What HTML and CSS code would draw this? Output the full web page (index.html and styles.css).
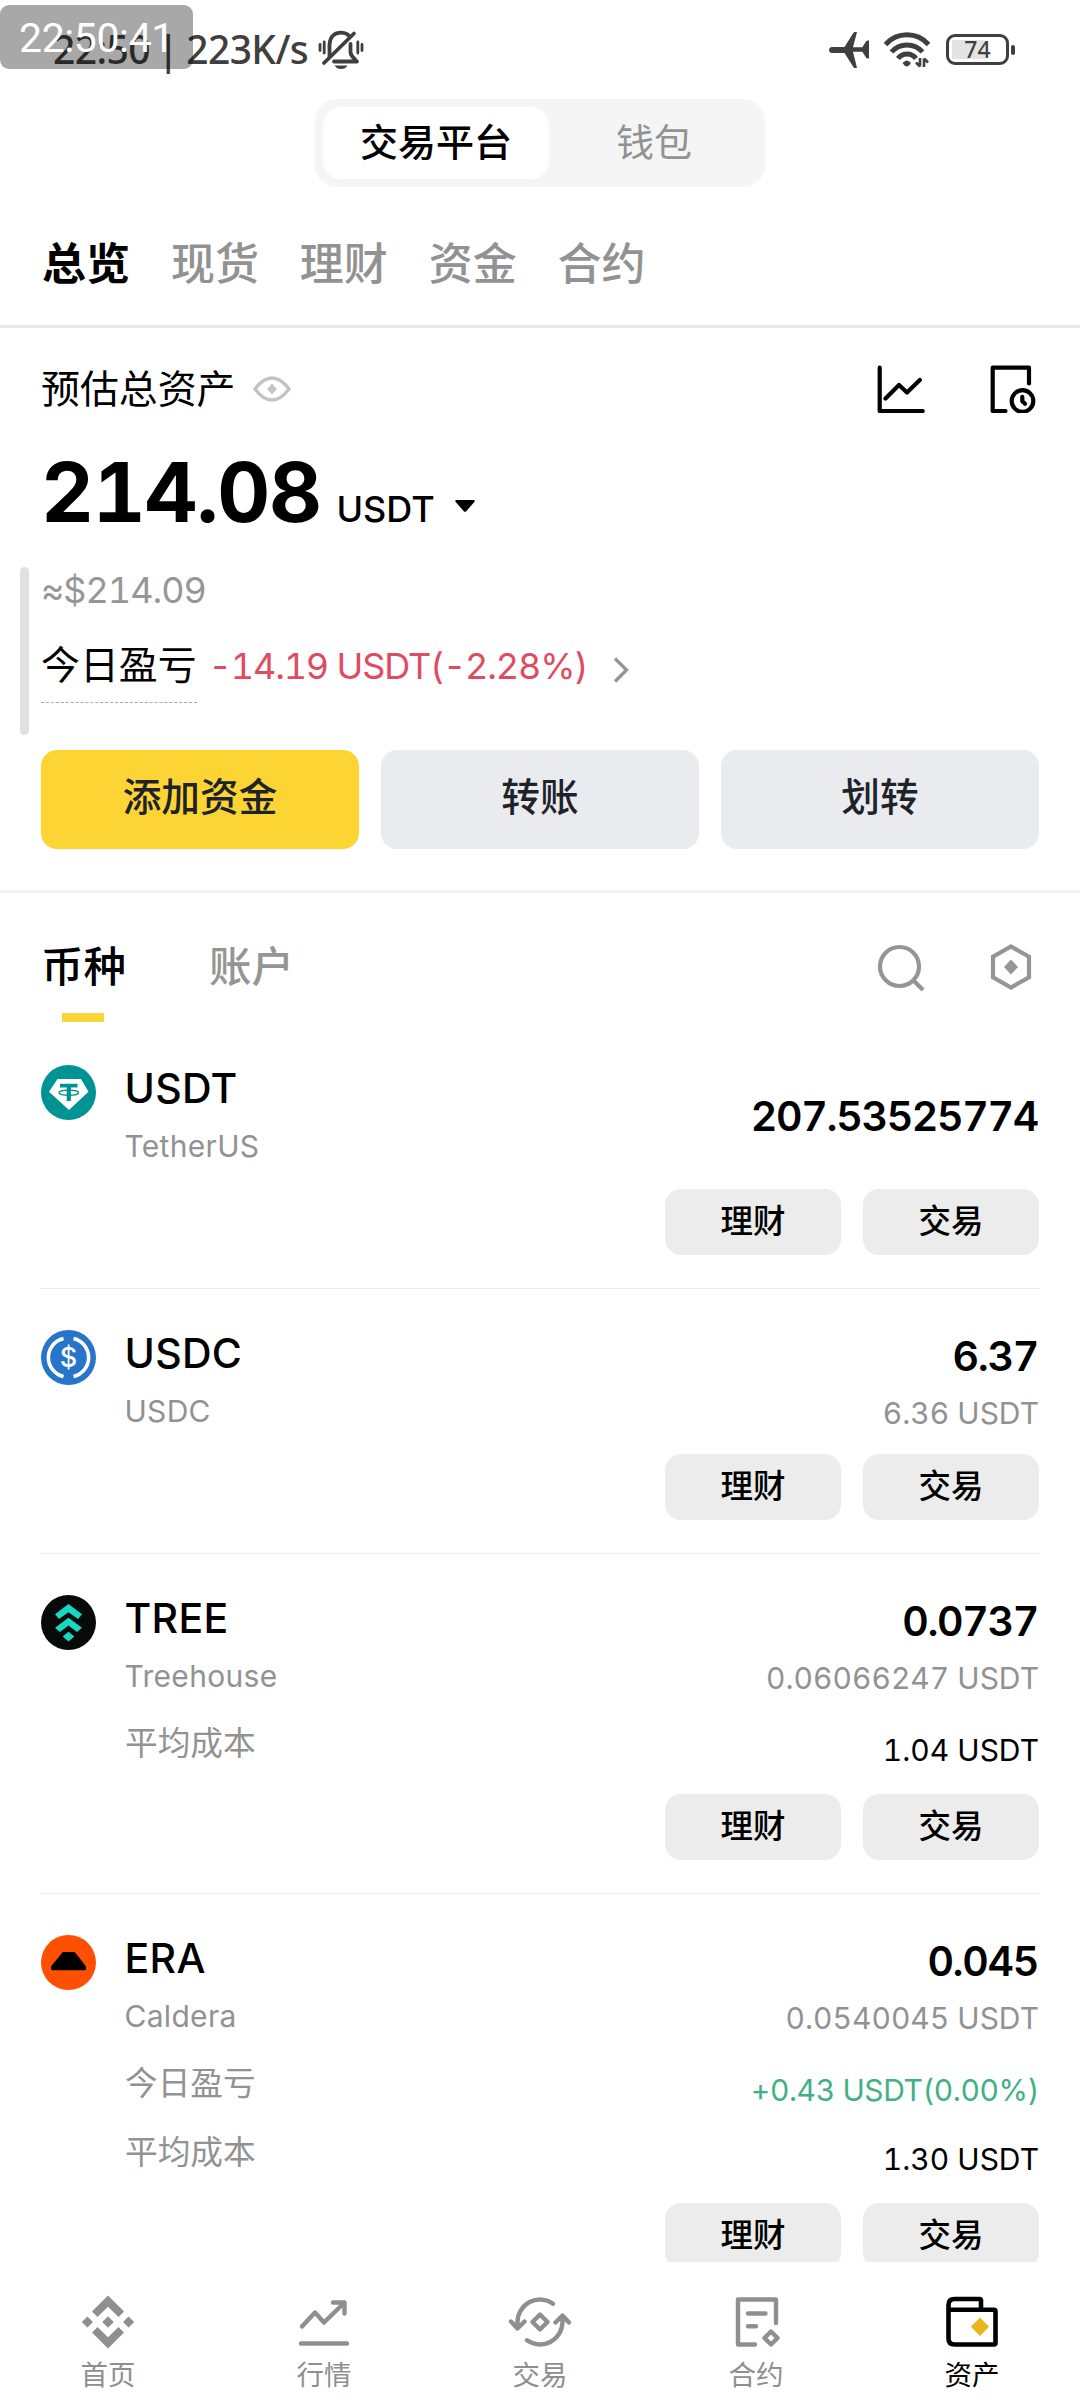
FILE: index.html
```html
<!DOCTYPE html>
<html lang="zh-CN">
<head>
<meta charset="utf-8">
<title>资产总览</title>
<link rel="stylesheet" href="styles.css">
</head>
<body>
<div class="app">
  <div class="clock-overlay">22:50:41</div>
  <header class="status">
    <span class="status-text">22:50 | 223K/s</span>
    <svg class="bell" width="46" height="40" viewBox="0 0 46 40" fill="none" stroke="#3f3f3f" stroke-width="3.8" stroke-linecap="round">
      <path d="M11.500 27V14.500C12 6 17 2.700 23 2.700c3 0 6 1 8 3M32.500 14v8c0 3 2 5 6.500 9.500H16" stroke-linejoin="round"/>
      <path d="M36 3.500 6 33"/>
      <path d="M16.500 35.500h13c-1.500 2.300-3.500 3.600-6.500 3.600s-5-1.300-6.500-3.600z" fill="#3f3f3f" stroke="none"/>
      <path d="M2 14.500v6M6.200 12v11M39.800 12v11M44 14.500v6" stroke-width="2.800"/>
    </svg>
    <div class="status-right">
      <svg width="40" height="38" viewBox="0 0 40 38" fill="#3f3f3f"><path d="M3 16h12.500L24 2.500c.6-1 1.300-1.500 2.200-1.500h1.800L24 16.200h9.300l3.700-5.700c.5-.8 1.200-1 3-1v18c-1.800 0-2.500-.2-3-1l-3.700-5.700H24L28 37h-1.800c-.9 0-1.600-.5-2.200-1.500L15.500 22H3c-4 0-4-6 0-6z"/></svg>
      <svg class="wifi" width="46" height="36" viewBox="0 0 46 36" fill="none" stroke="#3f3f3f" stroke-width="5">
        <path d="M1.500 12.500C13-.5 33-.5 44.500 12.500M7.500 20c8-9.500 23-9.500 31 0M14 26.500c4.500-6 13.500-6 18 0"/>
        <path d="M18.500 31q4.500-5 8.500 0l-2 2.500q-2.250 2-4.500 0z" fill="#3f3f3f" stroke="none"/>
        <path d="M36 26v8.500M40 35v-8.500M32 30.500l4 4M40 26.500l4 4" stroke-width="2.600"/>
      </svg>
      <div class="battery">74</div>
    </div>
  </header>

  <div class="segment">
    <div class="segment-item segment-item--on">交易平台</div>
    <div class="segment-item">钱包</div>
  </div>

  <nav class="tabs">
    <span class="tab tab--on">总览</span><span class="tab">现货</span><span class="tab">理财</span><span class="tab">资金</span><span class="tab">合约</span>
  </nav>

  <section class="portfolio">
    <div class="portfolio-top">
      <span>预估总资产</span>
      <svg class="eye" width="38" height="26" viewBox="0 0 38 26"><path d="M2 13C8 5 13 2 19 2s11 3 17 11C30 21 25 24 19 24S8 21 2 13z" fill="none" stroke="#c3c3c3" stroke-width="3.400"/><path d="M19 7.500l4.800 5.500-4.800 5.500-4.800-5.500z" fill="#c3c3c3"/></svg>
      <div class="portfolio-tools">
        <svg width="48" height="48" viewBox="0 0 48 48" fill="none" stroke="#000" stroke-width="4.200" stroke-linecap="round" stroke-linejoin="round"><path d="M2.700 2.700v43.300h43M8.500 33.500 22 20l8 7.500L42.800 15"/></svg>
        <svg width="46" height="48" viewBox="0 0 46 48" fill="none" stroke="#000" stroke-width="4.200" stroke-linecap="round" stroke-linejoin="round"><path d="M39 18.500V2.700H2.700V46H15.500"/><circle cx="32.500" cy="36" r="10.800"/><path d="M32.300 31.800v4.400l2.700 2.600"/></svg>
      </div>
    </div>
    <div class="balance">
      <span class="balance-value">214.08</span><span class="balance-unit">USDT</span>
      <svg class="caret" width="20" height="12" viewBox="0 0 20 12"><path d="M1 0h18q1.200.6.500 1.800L11.200 11.300q-1.200 1-2.400 0L.5 1.800Q-.2.600 1 0z"/></svg>
    </div>
    <div class="approx">≈$214.09</div>
    <div class="pnl">
      <span class="pnl-label">今日盈亏</span>
      <span class="pnl-value">-14.19 USDT(-2.28%)</span>
      <svg class="chevron" width="16" height="26" viewBox="0 0 16 26" fill="none" stroke="#959595" stroke-width="3.400"><path d="M2 1.500 13.500 13 2 24.500"/></svg>
    </div>
    <div class="actions">
      <div class="action action--primary">添加资金</div>
      <div class="action">转账</div>
      <div class="action">划转</div>
    </div>
    <div class="side-bar"></div>
  </section>

  <div class="asset-tabs">
    <span class="asset-tab asset-tab--on">币种</span>
    <span class="asset-tab">账户</span>
    <div class="asset-tools">
      <svg width="48" height="48" viewBox="0 0 48 48" fill="none" stroke="#959595" stroke-width="4.200"><circle cx="22.500" cy="22.500" r="19.500"/><path d="M36.500 36.500 46 46"/></svg>
      <svg width="42" height="46" viewBox="0 0 42 46"><path d="M21 2.500 39 12.800v20.400L21 43.500 3 33.200V12.800z" fill="none" stroke="#959595" stroke-width="4.200"/><path d="M21 15.500l7 7.500-7 7.500-7-7.500z" fill="#959595"/></svg>
    </div>
  </div>

  <main class="coins">
    <article class="coin">
      <div class="coin-head">
        <svg class="coin-icon" viewBox="0 0 55 55"><circle cx="27.500" cy="27.500" r="27.500" fill="#009393"/><path d="M16.500 14h23.500l7.500 12.800L28 45 8 26.800z" fill="#fff"/><path d="M19 18.700h17.500v3.700h-6.600V36h-4.200V22.400H19z" fill="#009393"/><ellipse cx="27.800" cy="27.800" rx="9.800" ry="2.600" fill="none" stroke="#009393" stroke-width="1.300"/></svg>
        <div class="coin-names"><span class="coin-name">USDT</span><span class="coin-full">TetherUS</span></div>
        <div class="coin-amounts coin-amounts--single"><span class="coin-amount">207.53525774</span></div>
      </div>
      <div class="coin-actions"><span class="chip">理财</span><span class="chip">交易</span></div>
    </article>
    <article class="coin">
      <div class="coin-head">
        <svg class="coin-icon" viewBox="0 0 55 55"><circle cx="27.500" cy="27.500" r="27.500" fill="#2775ca"/><path d="M22.500 8.500a19.500 19.500 0 0 0 0 38M32.500 8.500a19.500 19.500 0 0 1 0 38" fill="none" stroke="#fff" stroke-width="3.600"/><text x="27.500" y="37" text-anchor="middle" class="dollar">$</text></svg>
        <div class="coin-names"><span class="coin-name">USDC</span><span class="coin-full">USDC</span></div>
        <div class="coin-amounts"><span class="coin-amount">6.37</span><span class="coin-value">6.36 USDT</span></div>
      </div>
      <div class="coin-actions"><span class="chip">理财</span><span class="chip">交易</span></div>
    </article>
    <article class="coin">
      <div class="coin-head">
        <svg class="coin-icon" viewBox="0 0 55 55"><circle cx="27.500" cy="27.500" r="27.500" fill="#080a0a"/><path d="M27.500 9 41 19.300 37 24 27.500 17.300 18 24 14 19.300zM27.500 22.800 41 32.700 36 37 27.500 30.500 19 37 14 32.700zM27.500 36.800l5.800 4.700-5.800 5-5.800-5z" fill="#14d9c0"/></svg>
        <div class="coin-names"><span class="coin-name">TREE</span><span class="coin-full">Treehouse</span></div>
        <div class="coin-amounts"><span class="coin-amount">0.0737</span><span class="coin-value">0.06066247 USDT</span></div>
      </div>
      <div class="coin-details">
        <div class="detail"><span class="detail-label">平均成本</span><span class="detail-value">1.04 USDT</span></div>
      </div>
      <div class="coin-actions"><span class="chip">理财</span><span class="chip">交易</span></div>
    </article>
    <article class="coin">
      <div class="coin-head">
        <svg class="coin-icon" viewBox="0 0 55 55"><circle cx="27.500" cy="27.500" r="27.500" fill="#ff4f00"/><path d="M22.500 18.500h10.500l10.500 13.500v1.800h-32V32z" stroke="#000" stroke-width="3" stroke-linejoin="round"/></svg>
        <div class="coin-names"><span class="coin-name">ERA</span><span class="coin-full">Caldera</span></div>
        <div class="coin-amounts"><span class="coin-amount">0.045</span><span class="coin-value">0.0540045 USDT</span></div>
      </div>
      <div class="coin-details">
        <div class="detail"><span class="detail-label">今日盈亏</span><span class="detail-value detail-value--up">+0.43 USDT(0.00%)</span></div>
        <div class="detail"><span class="detail-label">平均成本</span><span class="detail-value">1.30 USDT</span></div>
      </div>
      <div class="coin-actions"><span class="chip">理财</span><span class="chip">交易</span></div>
    </article>
  </main>

  <nav class="bottom-nav">
    <div class="nav-item">
      <svg width="64" height="56" viewBox="-32 -28 64 56" fill="#8f8f8f"><path d="M0-26.500 16-10.500 10.500-5 0-15.300-10.500-5-16-10.500zM0 26.500 16 10.500 10.500 5 0 15.300-10.500 5-16 10.500zM0-5.800 5.800 0 0 5.800-5.800 0zM-20.500-5.600-15 0l-5.500 5.600L-26.200 0zM20.500-5.600 26.200 0l-5.700 5.600L15 0z"/></svg>
      <span>首页</span>
    </div>
    <div class="nav-item">
      <svg width="64" height="56" viewBox="-32 -28 64 56" fill="none" stroke="#8f8f8f" stroke-width="4.400" stroke-linecap="round" stroke-linejoin="round"><path d="M-22 4.500-9-9.500 0 .5 20.500-19.500M9-19.500H20.500V-8.500M-23 21.500H23"/></svg>
      <span>行情</span>
    </div>
    <div class="nav-item">
      <svg width="64" height="56" viewBox="-32 -28 64 56" fill="none" stroke="#8f8f8f" stroke-width="4.400" stroke-linecap="round" stroke-linejoin="round"><path d="M13-18.300A22.500 22.500 0 0 0-22.500 0V6M-29-.5-22.500 6.500-15.500-.5M-13 18.300A22.500 22.500 0 0 0 22.500 0V-6M29 .5 22.500-6.500 15.500.5M0-7.500 7.500 0 0 7.500-7.500 0z"/></svg>
      <span>交易</span>
    </div>
    <div class="nav-item">
      <svg width="64" height="56" viewBox="-32 -28 64 56" fill="none" stroke="#8f8f8f" stroke-width="4.400" stroke-linecap="round" stroke-linejoin="round"><path d="M20 1V-22.500H-18V22.500H-1M-8-8.500H9.500M-8 4.300H0M15 9.500 21.500 16 15 22.500 8.500 16z"/></svg>
      <span>合约</span>
    </div>
    <div class="nav-item nav-item--on">
      <svg width="64" height="56" viewBox="-32 -28 64 56" fill="none" stroke="#000" stroke-width="4.600"><path d="M-23.500-12.500V-17q0-6 6-6H7.500q1.500 0 1.500 1.500V-12M-23.500-12.300H22q1.500 0 1.500 1.500V21q0 1.500-1.500 1.500H-17.500q-6 0-6-6z"/><path d="M8-4.500 17 4.800 8 14-1.200 4.800z" fill="#ecb51a" stroke="none"/></svg>
      <span>资产</span>
    </div>
  </nav>
</div>
</body>
</html>
```
FILE: styles.css
```css
* {
  box-sizing: border-box;
}

body {
  margin: 0;
  background: #fff;
  color: #000;
  font-family: Inter, "Noto Sans CJK SC", sans-serif;
  font-feature-settings: "tnum";
}

svg {
  display: block;
  flex: none;
}

.app {
  position: relative;
  display: flex;
  flex-direction: column;
  width: 1080px;
  height: 2400px;
  overflow: hidden;
}

.clock-overlay {
  position: absolute;
  z-index: 2;
  left: 0;
  top: 5px;
  width: 193px;
  height: 64px;
  padding-left: 19px;
  border-radius: 9px;
  background: rgba(0, 0, 0, 0.34);
  color: #fff;
  font: 41px/66px Roboto, sans-serif;
  letter-spacing: -0.4px;
}

/* Status bar */
.status {
  display: flex;
  align-items: center;
  flex: none;
  height: 99px;
  padding: 0 71px 0 53px;
  color: #3f3f3f;
}

.status-text {
  width: 257px;
  padding-bottom: 2px;
  font: 500 39px/94px "Noto Sans", sans-serif;
  letter-spacing: -0.6px;
  word-spacing: -1.8px;
  white-space: pre;
}

.bell {
  margin-left: 8px;
}

.status-right {
  display: flex;
  align-items: center;
  margin-left: auto;
}

.wifi {
  margin-left: 15px;
}

.battery {
  position: relative;
  width: 63px;
  height: 31px;
  margin-left: 16px;
  border: 3px solid #3f3f3f;
  border-radius: 9px;
  background: linear-gradient(#e4e4e4, #e4e4e4) 3px 3px / 33px 19px no-repeat;
  text-align: center;
  font: 500 23px/25px "Noto Sans", sans-serif;
}

.battery::after {
  content: "";
  position: absolute;
  right: -9px;
  top: 8px;
  width: 4px;
  height: 10px;
  border-radius: 2px;
  background: #3f3f3f;
}

/* Platform / wallet switch */
.segment {
  display: flex;
  flex: none;
  align-self: center;
  width: 450px;
  height: 88px;
  padding: 8px;
  border-radius: 22px;
  background: #f5f5f5;
}

.segment-item {
  flex: 1;
  padding-left: 2px;
  color: #929292;
  text-align: center;
  font-size: 38px;
  line-height: 70px;
}

.segment-item--on {
  flex: none;
  width: 226px;
  padding-left: 0;
  border-radius: 18px;
  background: #fff;
  color: #000;
  font-weight: 500;
}

.tabs {
  display: flex;
  flex: none;
  gap: 40.9px;
  height: 141px;
  padding: 16px 42px 0;
  border-bottom: 3px solid #e9e9e9;
  font-size: 44px;
  font-weight: 500;
  line-height: 122px;
}

.tab {
  color: #929292;
}

.tab--on {
  color: #000;
  font-weight: 700;
}

/* Portfolio summary */
.portfolio {
  position: relative;
  flex: none;
  height: 565px;
  padding: 0 41px;
  border-bottom: 3px solid #f3f3f3;
}

.side-bar {
  position: absolute;
  left: 20px;
  top: 239px;
  width: 9px;
  height: 168px;
  border-radius: 5px;
  background: #e0e0e0;
}

.portfolio-top {
  display: flex;
  align-items: center;
  height: 121px;
  font-size: 38.9px;
  line-height: 121px;
}

.eye {
  margin-left: 18px;
}

.portfolio-tools {
  display: flex;
  gap: 65px;
  margin-left: auto;
  padding-right: 3px;
}

.balance {
  display: flex;
  align-items: baseline;
  height: 88px;
  line-height: 87px;
}

.balance-value {
  font-size: 82px;
  font-weight: 700;
  letter-spacing: -1.2px;
}

.balance-unit {
  margin-left: 15.5px;
  font-size: 36px;
  font-weight: 500;
}

.caret {
  align-self: center;
  margin: 26px 0 0 20px;
}

.approx {
  height: 106px;
  color: #969696;
  font-size: 36px;
  letter-spacing: -1px;
  line-height: 106px;
}

.pnl {
  display: flex;
  align-items: flex-start;
  height: 107px;
  line-height: 44px;
}

.pnl-label {
  padding-bottom: 15px;
  border-bottom: 1px dashed #a8a8a8;
  font-size: 38.9px;
}

.pnl-value {
  width: 376px;
  margin-left: 12px;
  color: #df4b61;
  font-size: 36px;
  letter-spacing: -1.15px;
  line-height: 46px;
  white-space: nowrap;
}

.chevron {
  margin: 14px 0 0 28px;
}

.actions {
  display: flex;
  gap: 22px;
}

.action {
  flex: 1;
  height: 99px;
  border-radius: 16px;
  background: #eaebef;
  color: #1e2329;
  text-align: center;
  font-size: 38.7px;
  font-weight: 500;
  line-height: 95px;
}

.action--primary {
  background: #fcd535;
}

/* Asset list tabs */
.asset-tabs {
  display: flex;
  flex: none;
  height: 130px;
  padding: 0 41px;
  font-size: 42.5px;
  font-weight: 500;
}

.asset-tab {
  height: 129px;
  color: #959595;
  line-height: 148px;
}

.asset-tab + .asset-tab {
  margin-left: 83px;
}

.asset-tab--on {
  background: linear-gradient(#f9d63a, #f9d63a) 21px 120px / 42px 9px no-repeat;
  color: #000;
}

.asset-tools {
  display: flex;
  gap: 65px;
  margin-left: auto;
  padding: 51px 7px 0 0;
}

/* Coins */
.coins {
  flex: 1;
  min-height: 0;
  overflow: hidden;
  padding: 0 41px;
}

.coin {
  padding: 41px 0 33px;
  border-top: 1px solid #ebebeb;
}

.coin:first-child {
  border-color: transparent;
}

.coin-head {
  display: flex;
  height: 117px;
}

.coin-icon {
  width: 55px;
  height: 55px;
}

.dollar {
  fill: #fff;
  font-size: 27px;
  font-weight: 500;
}

.coin-names {
  display: flex;
  flex-direction: column;
  margin-left: 28.5px;
}

.coin-name {
  font-size: 41px;
  font-weight: 500;
  letter-spacing: 0.3px;
  line-height: 47px;
}

.coin-full {
  color: #929292;
  font-size: 30px;
  letter-spacing: 0.3px;
  line-height: 68px;
}

.coin-amounts {
  display: flex;
  flex-direction: column;
  align-items: flex-end;
  margin-left: auto;
}

.coin-amount {
  padding-right: 1px;
  font-size: 41px;
  font-weight: 600;
  letter-spacing: -1.3px;
  line-height: 52px;
}

.coin-amounts--single .coin-amount {
  line-height: 103px;
}

.coin-value {
  color: #929292;
  font-size: 30px;
  line-height: 62px;
}

.coin-details {
  padding: 0 0 6px 84px;
}

.detail {
  display: flex;
  justify-content: space-between;
  height: 69px;
  line-height: 60px;
}

.detail-label {
  padding-top: 1px;
  color: #929292;
  font-size: 32.7px;
}

.detail-value {
  padding-top: 8px;
  font-size: 30px;
}

.detail-value--up {
  color: #41b184;
  letter-spacing: -0.4px;
}

.coin-actions {
  display: flex;
  justify-content: flex-end;
  gap: 22px;
  padding-top: 7px;
}

.chip {
  width: 176px;
  height: 66px;
  border-radius: 16px;
  background: #ececec;
  text-align: center;
  font-size: 32.5px;
  font-weight: 500;
  line-height: 66px;
}

/* Bottom navigation */
.bottom-nav {
  display: flex;
  flex: none;
  height: 138px;
  padding-top: 32px;
  background: #fff;
  color: #8f8f8f;
}

.nav-item {
  display: flex;
  flex: 1;
  flex-direction: column;
  align-items: center;
  font-size: 27.5px;
  line-height: 51px;
}

.nav-item--on {
  color: #000;
}
```
